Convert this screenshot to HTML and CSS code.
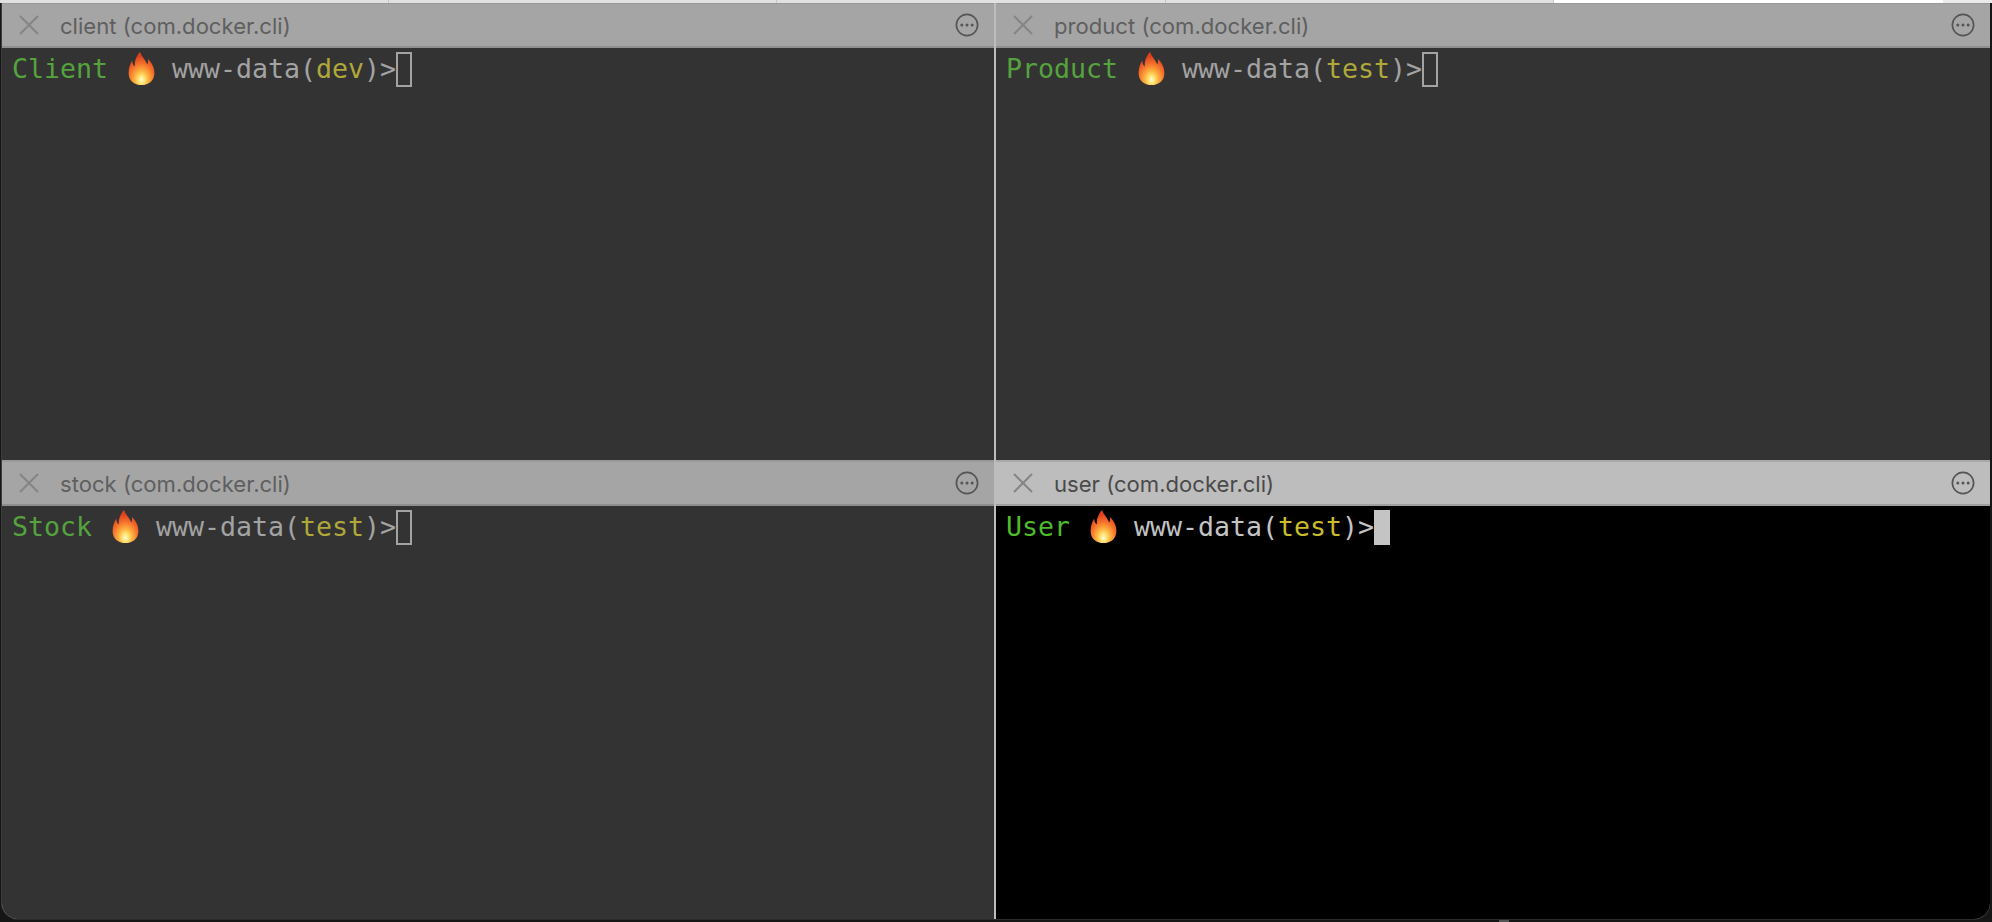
FILE: index.html
```html
<!DOCTYPE html>
<html lang="en">
<head>
<meta charset="utf-8">
<title>iTerm panes</title>
<link rel="stylesheet" href="styles.css">
</head>
<body>
<svg class="defs" width="0" height="0" aria-hidden="true">
  <defs>
    <radialGradient id="fire" cx="50%" cy="84%" r="72%">
      <stop offset="0" stop-color="#fffbd8"/>
      <stop offset="0.16" stop-color="#ffe676"/>
      <stop offset="0.38" stop-color="#fdb03e"/>
      <stop offset="0.68" stop-color="#f4702b"/>
      <stop offset="1" stop-color="#dd3f1f"/>
    </radialGradient>
    <symbol id="flame" viewBox="0 0 25 32">
      <path fill="url(#fire)" d="M11 0C13 5 16 7 18 12C19 10 19 8 18.5 6.5C22.5 10 25 15 25 20.5C25 27.5 19.5 32 12.5 32C5.5 32 0 27.5 0 20.5C0 15.5 1.5 12 3.5 8C3.5 11 4.5 13 6 14C5.5 9 7.5 4 11 0Z"/>
    </symbol>
    <symbol id="more" viewBox="0 0 24 24">
      <circle cx="12" cy="12" r="10.6" fill="none" stroke="currentColor" stroke-width="1.7"/>
      <circle cx="6.8" cy="12" r="1.5" fill="currentColor"/>
      <circle cx="12" cy="12" r="1.5" fill="currentColor"/>
      <circle cx="17.2" cy="12" r="1.5" fill="currentColor"/>
    </symbol>
    <symbol id="close" viewBox="0 0 20 20">
      <path d="M1 1 19 19M19 1 1 19" fill="none" stroke="currentColor" stroke-width="2"/>
    </symbol>
  </defs>
</svg>
<div class="tabstrip">
  <span class="tab"></span>
  <span class="tab"></span>
  <span class="tab"></span>
  <span class="tab"></span>
  <span class="tab current"></span>
  <span class="tab rest"></span>
</div>
<main class="window">
  <section class="pane">
    <header class="title">
      <svg class="close"><use href="#close"/></svg>
      <span class="name">client (com.docker.cli)</span>
      <svg class="more"><use href="#more"/></svg>
    </header>
    <div class="term"><span class="green">Client</span> <svg class="flame"><use href="#flame"/></svg> www-data(<span class="yellow">dev</span>)&gt;<span class="cursor"></span></div>
  </section>
  <section class="pane">
    <header class="title">
      <svg class="close"><use href="#close"/></svg>
      <span class="name">product (com.docker.cli)</span>
      <svg class="more"><use href="#more"/></svg>
    </header>
    <div class="term"><span class="green">Product</span> <svg class="flame"><use href="#flame"/></svg> www-data(<span class="yellow">test</span>)&gt;<span class="cursor"></span></div>
  </section>
  <section class="pane">
    <header class="title">
      <svg class="close"><use href="#close"/></svg>
      <span class="name">stock (com.docker.cli)</span>
      <svg class="more"><use href="#more"/></svg>
    </header>
    <div class="term"><span class="green">Stock</span> <svg class="flame"><use href="#flame"/></svg> www-data(<span class="yellow">test</span>)&gt;<span class="cursor"></span></div>
  </section>
  <section class="pane active">
    <header class="title">
      <svg class="close"><use href="#close"/></svg>
      <span class="name">user (com.docker.cli)</span>
      <svg class="more"><use href="#more"/></svg>
    </header>
    <div class="term"><span class="green">User</span> <svg class="flame"><use href="#flame"/></svg> www-data(<span class="yellow">test</span>)&gt;<span class="cursor"></span></div>
  </section>
</main>
<span class="scroll-mark"></span>
</body>
</html>
```
FILE: styles.css
```css
* { box-sizing: border-box; }
html, body { height: 100%; }
body {
  margin: 0;
  background: #161616;
  overflow: hidden;
}
.defs { position: absolute; }
.tabstrip {
  height: 3px;
  display: flex;
  background: #e3e0e1;
}
.tab {
  width: 388.5px;
  flex: none;
  border-right: 1px solid #c9c6c7;
}
.tab.current { background: #fff; border-right: 0; }
.tab.rest { width: auto; flex: 1; background: #ecebeb; border-right: 0; }
.window {
  width: 1988px;
  height: 916px;
  margin-left: 2px;
  display: grid;
  grid-template-columns: 992px 994px;
  grid-template-rows: 457px 459px;
  column-gap: 2px;
  background: #bdbdbd;
  border-radius: 0 0 16px 16px;
  box-shadow: 0 1px 0 #2b2b2b, -1px 0 0 #3d3d3d;
  overflow: hidden;
}
.pane {
  display: flex;
  flex-direction: column;
  min-height: 0;
}
.title {
  height: 46px;
  flex: none;
  display: flex;
  align-items: center;
  padding: 0 15px 0 17px;
  background: #a5a5a5;
  border-top: 2px solid #999;
  border-bottom: 2px solid #8f8f8f;
  color: #5f5f5f;
}
.pane:nth-child(-n+2) .title { height: 45px; border-top-width: 1px; }
.close { width: 20px; height: 20px; color: #858585; flex: none; }
.name {
  margin-left: 21px;
  padding-top: 2px;
  font: 22.1px/24px Inter, "Liberation Sans", Arial, sans-serif;
  flex: 1;
}
.more { width: 24px; height: 24px; color: #555; flex: none; }
.term {
  flex: 1;
  background: #333;
  padding: 1px 0 0 10px;
  color: #a3a3a3;
  font: 26.58px/40px "DejaVu Sans Mono", monospace;
  white-space: pre;
}
.green { color: #55a33d; }
.yellow { color: #b0a83a; }
.flame {
  width: 27px;
  height: 33px;
  margin: 0 1px 0 4px;
  vertical-align: -7px;
}
.cursor {
  display: inline-block;
  width: 16px;
  height: 35px;
  vertical-align: -9px;
  border: 2px solid #a3a3a3;
}
.active .title {
  background: #bdbdbd;
  border-top-color: #a8a8a8;
  border-bottom-color: #9f9f9f;
  color: #4a4a4a;
}
.active .term { background: #000; color: #c4c4c4; }
.active .green { color: #4fbb2c; }
.active .yellow { color: #c9bd2c; }
.active .cursor { background: #c4c4c4; border-color: #c4c4c4; }
.scroll-mark {
  position: absolute;
  left: 1499px;
  top: 920px;
  width: 10px;
  height: 2px;
  background: #555;
}
```
